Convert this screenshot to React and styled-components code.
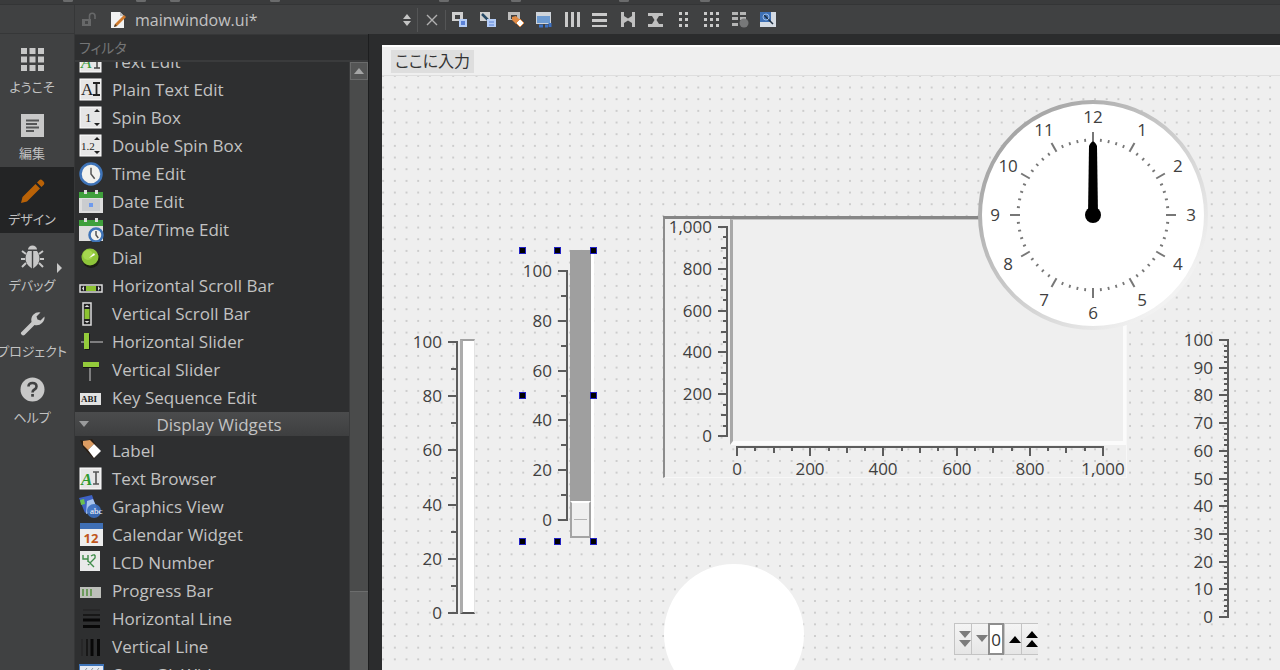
import React from 'react';
import { useState } from 'react';
import styled, { createGlobalStyle, css } from 'styled-components';

// rail on the left
const modes = [
    { id: 'welcome', label: 'ようこそ' },
    { id: 'edit', label: '編集' },
    { id: 'design', label: 'デザイン' },
    { id: 'debug', label: 'デバッグ', more: true },
    { id: 'project', label: 'プロジェクト' },
    { id: 'help', label: 'ヘルプ' },
];

const inputWidgets = [
    ['richtext', 'Text Edit'],
    ['plaintext', 'Plain Text Edit'],
    ['spin', 'Spin Box'],
    ['dspin', 'Double Spin Box'],
    ['time', 'Time Edit'],
    ['date', 'Date Edit'],
    ['datetime', 'Date/Time Edit'],
    ['dial', 'Dial'],
    ['hscroll', 'Horizontal Scroll Bar'],
    ['vscroll', 'Vertical Scroll Bar'],
    ['hslider', 'Horizontal Slider'],
    ['vslider', 'Vertical Slider'],
    ['keyseq', 'Key Sequence Edit'],
];

const displayWidgets = [
    ['label', 'Label'],
    ['browser', 'Text Browser'],
    ['graphics', 'Graphics View'],
    ['calendar', 'Calendar Widget'],
    ['lcd', 'LCD Number'],
    ['progress', 'Progress Bar'],
    ['hline', 'Horizontal Line'],
    ['vline', 'Vertical Line'],
    ['opengl', 'OpenGL Widget'],
];

const tools = [
    ['widgets', 'Edit Widgets'],
    ['signals', 'Edit Signals/Slots'],
    ['buddies', 'Edit Buddies'],
    ['tab', 'Edit Tab Order'],
    ['hlayout', 'Lay Out Horizontally'],
    ['vlayout', 'Lay Out Vertically'],
    ['hsplit', 'Lay Out Horizontally in Splitter'],
    ['vsplit', 'Lay Out Vertically in Splitter'],
    ['form', 'Lay Out in a Form Layout'],
    ['grid', 'Lay Out in a Grid'],
    ['break', 'Break Layout'],
    ['adjust', 'Adjust Size'],
];

const range = (from, to, step) => {
    const list = [];
    for (let v = from; v <= to; v += step) list.push(v);
    return list;
};

export default function App() {
    const [mode, setMode] = useState('design');
    const [filter, setFilter] = useState('');

    return (
        <>
            <GlobalStyle />
            <StyledPage>
                <StyledStrip>
                    {[63, 136, 170, 270, 439, 511, 619, 700].map(x => <i key={x} style={{ left: x }} />)}
                </StyledStrip>
                <StyledCorner />
                <StyledToolbar>
                    <StyledFileBox>
                        <LockIcon />
                        <FileIcon />
                        <StyledFileSelect aria-label="file">
                            <option>mainwindow.ui*</option>
                        </StyledFileSelect>
                        <svg width="10" height="14" viewBox="0 0 10 14" fill="#c4c4c4">
                            <path d="M5 1 9 6H1zM5 13 9 8H1z" />
                        </svg>
                    </StyledFileBox>
                    <StyledCloseButton aria-label="close">
                        <svg width="12" height="12" viewBox="0 0 12 12" stroke="#b0b0b0" strokeWidth="1.4">
                            <path d="M1 1 11 11M11 1 1 11" />
                        </svg>
                    </StyledCloseButton>
                    <StyledTools>
                        {tools.map(([id, name]) => (
                            <StyledToolButton key={id} aria-label={name}>
                                <ToolIcon id={id} />
                            </StyledToolButton>
                        ))}
                    </StyledTools>
                </StyledToolbar>

                <StyledRail>
                    {modes.map(m => (
                        <StyledMode key={m.id} $active={m.id === mode} onClick={() => setMode(m.id)}>
                            <ModeIcon id={m.id} />
                            <span>{m.label}</span>
                            {m.more && <StyledMore width="5" height="10" viewBox="0 0 5 10"><path d="M0 0 5 5 0 10z" fill="#c8c8c8" /></StyledMore>}
                        </StyledMode>
                    ))}
                </StyledRail>

                <StyledSidebar>
                    <StyledFilter
                        type="text"
                        aria-label="フィルタ"
                        placeholder="フィルタ"
                        value={filter}
                        onChange={e => setFilter(e.target.value)}
                    />
                    <StyledBoxArea>
                        <StyledLists>
                            <WidgetList items={inputWidgets} filter={filter} />
                            <StyledCategory>
                                <svg width="10" height="6" viewBox="0 0 10 6"><path d="M0 0H10L5 6z" fill="#9a9b9c" /></svg>
                                <span>Display Widgets</span>
                            </StyledCategory>
                            <WidgetList items={displayWidgets} filter={filter} />
                        </StyledLists>
                        <StyledScrollbar>
                            <StyledScrollUp aria-label="scroll up">
                                <svg width="10" height="6" viewBox="0 0 10 6"><path d="M0 6H10L5 0z" fill="#a5a6a6" /></svg>
                            </StyledScrollUp>
                            <StyledThumb />
                        </StyledScrollbar>
                    </StyledBoxArea>
                </StyledSidebar>

                <StyledWorkspace>
                    <StyledForm>
                        <StyledMenuBar>
                            <StyledMenuItem>ここに入力</StyledMenuItem>
                        </StyledMenuBar>
                        <FormCanvas />
                    </StyledForm>
                </StyledWorkspace>
            </StyledPage>
        </>
    )
}

function WidgetList({ items, filter }) {
    const shown = items.filter(([, name]) => name.toLowerCase().includes(filter.toLowerCase()));
    return (
        <StyledList>
            {shown.map(([id, name]) => (
                <StyledListItem key={id}>
                    <WidgetIcon id={id} />
                    {name}
                </StyledListItem>
            ))}
        </StyledList>
    )
}

// everything that was dropped on the form
function FormCanvas() {
    const [level, setLevel] = useState(0);
    const [count, setCount] = useState(0);

    return (
        <StyledCanvas>
            <StyledGridDots>
                <defs>
                    <pattern id="dots" x="7" y="-6" width="11.67" height="11.67" patternUnits="userSpaceOnUse">
                        <rect x="5" y="5" width="1.7" height="1.7" fill="#c2c2c2" />
                    </pattern>
                </defs>
                <rect width="100%" height="100%" fill="url(#dots)" />
            </StyledGridDots>

            <StyledPlaced $x={26} $y={254}>
                <VerticalScale length={271} max={100} major={20} medium={10} minor={10} />
                <StyledPipe />
            </StyledPlaced>

            <StyledPlaced $x={136} $y={174}>
                <StyledScaleOffset>
                    <VerticalScale length={249} max={100} major={20} medium={10} minor={10} />
                </StyledScaleOffset>
                <StyledSlider
                    type="range"
                    aria-label="slider"
                    min="0"
                    max="100"
                    value={level}
                    onChange={e => setLevel(Number(e.target.value))}
                />
                {[[2, 0], [37, 0], [73, 0], [2, 145], [73, 145], [2, 291], [37, 291], [73, 291]].map(([x, y]) => (
                    <StyledHandle key={x + '-' + y} style={{ left: x, top: y }} />
                ))}
            </StyledPlaced>

            <StyledPlot>
                <StyledPlotAxis>
                    <VerticalScale length={209} max={1000} major={200} medium={100} minor={50} />
                </StyledPlotAxis>
                <StyledPlotArea />
                <StyledPlotBottom>
                    <HorizontalScale length={366} max={1000} major={200} medium={100} minor={50} />
                </StyledPlotBottom>
            </StyledPlot>

            <StyledPlaced $x={595} $y={23}>
                <Clock />
            </StyledPlaced>

            <StyledPlaced $x={797} $y={252}>
                <VerticalScale length={277} max={100} major={10} medium={10} minor={2} />
            </StyledPlaced>

            <StyledPlaced $x={282} $y={488}>
                <StyledDisc />
            </StyledPlaced>

            <StyledCounter>
                <StyledStep aria-label="minus ten" onClick={() => setCount(count - 10)}>
                    <svg width="12" height="18" viewBox="0 0 12 18"><path d="M0 1H12L6 8zM0 10H12L6 17z" fill="#7c7c7c" /></svg>
                </StyledStep>
                <StyledStep aria-label="minus one" onClick={() => setCount(count - 1)}>
                    <svg width="12" height="8" viewBox="0 0 12 8"><path d="M0 0H12L6 7z" fill="#7c7c7c" /></svg>
                </StyledStep>
                <StyledCount aria-label="count" value={count} readOnly />
                <StyledStep aria-label="plus one" onClick={() => setCount(count + 1)}>
                    <svg width="12" height="8" viewBox="0 0 12 8"><path d="M0 8H12L6 1z" /></svg>
                </StyledStep>
                <StyledStep aria-label="plus ten" onClick={() => setCount(count + 10)}>
                    <svg width="12" height="18" viewBox="0 0 12 18"><path d="M0 8H12L6 1zM0 17H12L6 10z" /></svg>
                </StyledStep>
            </StyledCounter>
        </StyledCanvas>
    )
}

const tickLength = (v, major, medium) => (v % major === 0 ? 10 : v % medium === 0 ? 7 : 5);

function VerticalScale({ length, max, major, medium, minor }) {
    const pos = v => 12 + Math.round(length * (1 - v / max));
    return (
        <StyledScale width="50" height={length + 24}>
            {range(0, max, minor).map(v => (
                <rect key={v} x={50 - tickLength(v, major, medium)} y={pos(v) - 1} width={tickLength(v, major, medium)} height="2" />
            ))}
            <rect x="48" y="11" width="2" height={length + 2} />
            {range(0, max, major).map(v => (
                <text key={v} x="34" y={pos(v) + 6} textAnchor="end">{v.toLocaleString('en-US')}</text>
            ))}
        </StyledScale>
    )
}

function HorizontalScale({ length, max, major, medium, minor }) {
    const pos = v => 25 + Math.round(length * v / max);
    return (
        <StyledScale width={length + 50} height="34">
            {range(0, max, minor).map(v => (
                <rect key={v} x={pos(v) - 1} y="0" width="2" height={tickLength(v, major, medium)} />
            ))}
            <rect x="24" y="0" width={length + 2} height="2" />
            {range(0, max, major).map(v => (
                <text key={v} x={pos(v)} y="29" textAnchor="middle">{v.toLocaleString('en-US')}</text>
            ))}
        </StyledScale>
    )
}

function Clock() {
    const c = 116;
    const at = (deg, r) => {
        const a = (deg * Math.PI) / 180;
        return [c + r * Math.sin(a), c - r * Math.cos(a)];
    };
    return (
        <StyledScale width="232" height="232">
            <defs>
                <linearGradient id="rim" x1="0.15" y1="0.15" x2="0.85" y2="0.85">
                    <stop offset="0" stopColor="#a6a6a6" />
                    <stop offset="1" stopColor="#f2f2f2" />
                </linearGradient>
            </defs>
            <circle cx={c} cy={c} r="113" fill="#fff" stroke="url(#rim)" strokeWidth="4" />
            {range(0, 59, 1).map(i => {
                const hour = i % 5 === 0;
                const [x1, y1] = at(i * 6, hour ? 73 : 73.5);
                const [x2, y2] = at(i * 6, hour ? 83 : 76.5);
                return <line key={i} x1={x1} y1={y1} x2={x2} y2={y2} stroke="#777" strokeWidth={hour ? 2 : 1.8} />;
            })}
            {range(1, 12, 1).map(h => {
                const [x, y] = at(h * 30, 98);
                return <text key={h} x={x} y={y + 6} textAnchor="middle">{h}</text>;
            })}
            <path d={`M${c - 4} 47Q${c} 38 ${c + 4} 47L${c + 5} ${c}H${c - 5}z`} fill="#000" />
            <circle cx={c} cy={c} r="8" fill="#000" />
        </StyledScale>
    )
}

function LockIcon() {
    return (
        <svg width="16" height="18" viewBox="0 0 16 18" fill="none">
            <rect x="1" y="8" width="9" height="7" fill="#676869" />
            <path d="M8.500 8V5a2.700 2.700 0 0 1 5.500 0V8" stroke="#676869" strokeWidth="1.600" />
            <rect x="4" y="10" width="3" height="3" fill="#454647" />
        </svg>
    )
}

function FileIcon() {
    return (
        <svg width="18" height="18" viewBox="0 0 18 18">
            <path d="M2 1H11L15 5V17H2z" fill="#f2f2f2" />
            <path d="M11 1V5H15z" fill="#bdbdbd" />
            <path d="M5 16 6 13 15 4 17 6 8 15z" fill="#d07a2c" />
            <path d="M5 16 6 13 8 15z" fill="#4a3a2a" />
        </svg>
    )
}

const modeShapes = {
    welcome: <path d="M1 1h6v6H1zM9.500 1h6v6h-6zM18 1h6v6h-6zM1 9.500h6v6H1zM9.500 9.500h6v6h-6zM18 9.500h6v6h-6zM1 18h6v6H1zM9.500 18h6v6h-6zM18 18h6v6h-6z" />,
    edit: (
        <>
            <rect x="1" y="1" width="23" height="23" />
            <path d="M6 7.500h13M6 11h11M6 14.500h13M6 18h8" stroke="#555657" strokeWidth="1.800" />
        </>
    ),
    design: <path fill="#b96207" d="M1 24 2.500 18 15.500 5 20 9.500 7 22.500zM17 3.500 19.500 1Q21 0 22.500 1.500L23.500 2.500Q25 4 24 5.500L21.500 8z" />,
    debug: (
        <>
            <path d="M8 4.500a4.500 4 0 0 1 9 0z" />
            <path d="M11.800 6H8Q5.500 9 5.500 14T11.800 23.500zM13.200 6H17Q19.500 9 19.500 14T13.200 23.500z" />
            <path d="M6 9 2 6M5 14H1M6 18 2 22M19 9 23 6M20 14H24M19 18 23 22" stroke="#c8c8c8" strokeWidth="2" />
        </>
    ),
    project: <path d="M1 21.500 11.500 11Q10.500 6.500 13.500 3.500T20.500 1.500L16.500 5.500 17.500 8.500 20.500 9.500 24.500 5.500Q25 9 22 12T14.500 14L4.500 24Q3 25 1.700 23.700T1 21.500z" />,
    help: (
        <>
            <circle cx="12.500" cy="12.500" r="12" />
            <path d="M8.500 9.500Q8.500 6 12.500 6T16.500 9.500Q16.500 11.500 14.500 12.500T12.500 15.500" fill="none" stroke="#404142" strokeWidth="2.600" />
            <rect x="11.200" y="17" width="2.700" height="2.700" fill="#404142" />
        </>
    ),
};

function ModeIcon({ id }) {
    return <svg width="25" height="25" viewBox="0 0 25 25" fill="#c8c8c8">{modeShapes[id]}</svg>
}

const Paper = () => <rect x="1" y="1" width="21" height="21" fill="#e6e6e6" stroke="#fff" />;
const Clockface = ({ cx, cy, r }) => (
    <>
        <circle cx={cx} cy={cy} r={r} fill="#f2f2ee" stroke="#3f74b8" strokeWidth="2.500" />
        <path d={`M${cx} ${cy - r * 0.6}V${cy}L${cx + r * 0.35} ${cy + r * 0.45}`} fill="none" stroke="#555" strokeWidth="1.500" />
    </>
);
const CalendarPage = () => (
    <>
        <rect x="0" y="4" width="24" height="19" fill="#dedede" />
        <rect x="0" y="2" width="24" height="6" fill="#3fa03c" />
        <rect x="5" y="0" width="3" height="4" fill="#ddd" />
        <rect x="16" y="0" width="3" height="4" fill="#ddd" />
    </>
);

const widgetShapes = {
    richtext: <><Paper /><text x="2" y="18" fontSize="17" fill="#3a9a3a" fontStyle="italic">A</text><path d="M15 5h6M18 5v13M15 18h6" stroke="#444" strokeWidth="1.500" /></>,
    plaintext: <><Paper /><text x="2" y="17" fontSize="17" fill="#222">A</text><path d="M14 5h7M17.500 5v12M14 17h7" stroke="#222" strokeWidth="1.800" /></>,
    spin: <><Paper /><text x="6" y="16" fontSize="13" fill="#222">1</text><path d="M15 6 18 3 21 6zM15 17 18 20 21 17z" fill="#222" /></>,
    dspin: <><Paper /><text x="2" y="16" fontSize="11" fill="#222">1.2</text><path d="M15 6 18 3 21 6zM15 17 18 20 21 17z" fill="#222" /></>,
    time: <Clockface cx={12} cy={12} r={10.5} />,
    date: <><CalendarPage /><rect x="3" y="9" width="18" height="12" fill="#cacccf" /><rect x="10" y="13" width="4" height="4" fill="#6f9bee" /></>,
    datetime: <><CalendarPage /><Clockface cx={17} cy={17} r={6.5} /></>,
    dial: <><ellipse cx="12" cy="13" rx="9" ry="9" fill="#1d1f16" /><circle cx="11" cy="11" r="8.500" fill="#8fc63a" /><circle cx="9" cy="9" r="5" fill="#a6d84f" /><path d="M10 12 15 7 16 9z" fill="#fff" /></>,
    hscroll: <><rect x="1" y="11" width="22" height="7" fill="#222" stroke="#ddd" strokeWidth="1.500" /><rect x="7" y="12" width="10" height="5" fill="#8cc332" /><path d="M5 12V17L3 14.500zM19 12V17L21 14.500z" fill="#ddd" /></>,
    vscroll: <><rect x="4" y="1" width="8" height="22" fill="#222" stroke="#ddd" strokeWidth="1.500" /><rect x="5.500" y="7" width="5" height="10" fill="#8cc332" /><path d="M5.500 5h5L8 3zM5.500 19h5L8 21z" fill="#ddd" /></>,
    hslider: <><path d="M2 12H24" stroke="#9a9a9a" strokeWidth="1.500" /><rect x="5" y="3" width="5" height="16" fill="#94cb3b" /><path d="M10.500 4V19.500H6" fill="none" stroke="#151515" /></>,
    vslider: <><path d="M11 7V23" stroke="#9a9a9a" strokeWidth="1.500" /><rect x="4" y="4" width="16" height="5" fill="#94cb3b" /><path d="M4 9.500H20" stroke="#151515" /></>,
    keyseq: <><rect x="1" y="7" width="21" height="12" fill="#e2e2e2" /><text x="2" y="16" fontSize="9" fontWeight="bold" fill="#222">ABI</text></>,
    label: <><path d="M1 1 5 2 13 0 21 12 15 20 4 8z" fill="#2a1d12" /><path d="M4 2 11 1 15 5 9 11 4 6z" fill="#dc9c62" /><path d="M9 11 15 5 22 12 15 19z" fill="#fff" /></>,
    browser: <><Paper /><text x="2" y="18" fontSize="17" fill="#2f9a2f" fontStyle="italic" fontWeight="bold">A</text><path d="M14 5h6M17 5v12M14 17h6" stroke="#555" strokeWidth="1.600" /></>,
    graphics: <><path d="M0 3 13 0 17 12 6 18z" fill="#3e62c4" /><path d="M1 5 5 4 6 9 2 10z" fill="#6bbf4f" /><path d="M8 6 14 4 19 15 7 19z" fill="#a9c4ec" /><circle cx="15" cy="16" r="7" fill="#3b6fc0" fillOpacity=".9" /><text x="11" y="19" fontSize="9" fill="#fff">abc</text></>,
    calendar: <><rect x="1" y="1" width="23" height="22" fill="#ededed" /><rect x="1" y="0" width="23" height="6" fill="#3f6fb5" /><text x="12" y="20" fontSize="13" fontFamily="Open Sans, sans-serif" fontWeight="bold" fill="#c0561c" textAnchor="middle">12</text></>,
    lcd: <><rect x="1" y="0" width="20" height="20" fill="#e9e9e9" /><path d="M4 4V8H9M9 4V11M12 5Q17 2 16 7L9 14M9 10 15 16" fill="none" stroke="#3f8c4a" strokeWidth="1.400" /></>,
    progress: <><rect x="1" y="8" width="21" height="11" fill="#bdbfba" /><path d="M4 10V17M8 10V17M12 10V17" stroke="#6c9a5c" strokeWidth="2" /></>,
    hline: <><path d="M4 3H21" stroke="#202020" /><path d="M4 8H21" stroke="#181818" strokeWidth="2" /><path d="M4 13H21M4 19.500H21" stroke="#080808" strokeWidth="3" /></>,
    vline: <><path d="M3 4V21" stroke="#202020" /><path d="M8 4V21" stroke="#181818" strokeWidth="2" /><path d="M13 4V21M19.500 4V21" stroke="#080808" strokeWidth="3" /></>,
    opengl: <><rect x="0" y="2" width="25" height="20" fill="#e4e9f2" stroke="#3f74b8" strokeWidth="2" /><path d="M4 10 8 5M10 10 14 5M16 10 20 5" stroke="#8d949c" /></>,
};

function WidgetIcon({ id }) {
    return <svg width="25" height="24" viewBox="0 0 25 24" fontFamily='"Liberation Serif", serif'>{widgetShapes[id]}</svg>
}

const toolShapes = {
    widgets: <><path d="M1 1H12V10H1z" fill="#d0d0d0" /><path d="M4 4H9V8H4z" fill="#404142" /><path d="M8 8H16V16H8z" fill="#b5cdf7" /><path d="M10 10h4v4h-4z" fill="#5b82d8" /></>,
    signals: <><path d="M1 1H11V10H1z" fill="#d0d0d0" /><path d="M3 3 10 10" stroke="#274a66" strokeWidth="2.500" /><path d="M8 8H17V16H8z" fill="#b5cdf7" /><path d="M10 11h5M10 14h5" stroke="#5b82d8" /></>,
    buddies: <><path d="M1 1H13V9H1z" fill="#bdbdbd" /><path d="M4 4h6v4H4z" fill="#404142" /><path d="M5 6 9 5 13 9 9 13 5 9z" fill="#e08a45" /><path d="M9 12 13 8 17 12 13 16z" fill="#fff" stroke="#e08a45" /></>,
    tab: <><path d="M1 1H16V13H1z" fill="#cfd4da" /><path d="M2 5H15V12H2z" fill="#6d9bd2" /><path d="M4 15H8M10 15h3M15 12v4" stroke="#3d72c4" strokeWidth="3" /></>,
    hlayout: <path d="M2 1h3v15H2zM8 1h3v15H8zM14 1h3v15h-3z" fill="#cacaca" />,
    vlayout: <path d="M1 2h15v3H1zM1 8h15v3H1zM1 14h15v2H1z" fill="#cacaca" />,
    hsplit: <path d="M2 1h3v15H2zM13 1h3v15h-3zM5 5l4 2.500L13 5v7L9 9.500 5 12z" fill="#c0c0c0" />,
    vsplit: <path d="M1 2h15v3H1zM1 13h15v3H1zM5 5h7L9.500 9 12 13H5L7.500 9z" fill="#c0c0c0" />,
    form: <path d="M4 1h3v3H4zM10 1h3v3h-3zM4 7h3v3H4zM10 7h3v3h-3zM4 13h3v3H4zM10 13h3v3h-3z" fill="#cacaca" />,
    grid: <path d="M1 1h3v3H1zM7 1h3v3H7zM13 1h3v3h-3zM1 7h3v3H1zM7 7h3v3H7zM13 7h3v3h-3zM1 13h3v3H1zM7 13h3v3H7zM13 13h3v3h-3z" fill="#cacaca" />,
    break: <><path d="M1 1h6v3H1zM9 1h6v3H9zM1 6h6v3H1zM9 6h6v3H9zM1 12h6v3H1z" fill="#b5b5b5" /><circle cx="13" cy="12" r="4.500" fill="#777879" /></>,
    adjust: <><path d="M1 1H17V16H1z" fill="#d5dbe3" /><path d="M1 1H12V11H1z" fill="#3e70b4" /><path d="M5 4 14 13" stroke="#1f2f40" strokeWidth="1.500" /><circle cx="7" cy="6" r="3" fill="none" stroke="#9bbbe4" /></>,
};

function ToolIcon({ id }) {
    return <svg width="18" height="18" viewBox="0 0 18 18">{toolShapes[id]}</svg>
}

const GlobalStyle = createGlobalStyle`
* { box-sizing: border-box; }
body {
    margin: 0;
    overflow: hidden;
    background: #2e2f30;
    font-family: "Open Sans", "Noto Sans CJK JP", sans-serif;
    font-feature-settings: "palt";
}
button, input, select {
    font: inherit;
    font-feature-settings: inherit;
    color: inherit;
    border: 0;
    border-radius: 0;
    padding: 0;
    background: none;
}
`;

const StyledPage = styled.div`
display: grid;
grid-template-columns: 75px 294px 1fr;
grid-template-rows: 5px 29px 1fr;
height: 100vh;
color: #c2c2c2;
font-size: 17px;
`;

const StyledStrip = styled.div`
grid-column: 1 / -1;
position: relative;
overflow: hidden;
background: #3a3b3c;
border-bottom: 1px solid #343536;

i {
    position: absolute;
    top: -1px;
    width: 10px;
    height: 3px;
    border-radius: 2px;
    background: #6a6b6c;
}
`;

const StyledCorner = styled.div`
background: #404142;
border-right: 1px solid #363738;
border-bottom: 1px solid #363738;
`;

const StyledToolbar = styled.header`
grid-column: 2 / -1;
display: flex;
align-items: center;
background: #404142;
`;

const StyledFileBox = styled.div`
display: flex;
align-items: center;
gap: 8px;
width: 343px;
padding: 0 5px 0 6px;
border-right: 1px solid #545556;

svg:first-child {
    margin-right: 4px;
}
`;

const StyledFileSelect = styled.select`
flex: 1;
appearance: none;
outline: none;
font-size: 16px;
line-height: 24px;
`;

const StyledCloseButton = styled.button`
display: flex;
align-items: center;
justify-content: center;
width: 28px;
height: 20px;
border-right: 1px solid #545556;
`;

const StyledTools = styled.div`
display: flex;
`;

const StyledToolButton = styled.button`
display: flex;
align-items: center;
justify-content: center;
width: 28px;
height: 24px;
`;

const StyledRail = styled.nav`
display: flex;
flex-direction: column;
padding-top: 1px;
background: #404142;
border-right: 1px solid #363738;
`;

const StyledMode = styled.button`
position: relative;
display: flex;
flex-direction: column;
align-items: center;
justify-content: flex-end;
gap: 5px;
height: 66px;
padding-bottom: 4px;
padding-right: 10px;
font-size: 13px;
line-height: 20px;
white-space: nowrap;
cursor: pointer;
background: ${props => props.$active ? '#232425' : 'none'};
`;

const StyledMore = styled.svg`
position: absolute;
right: 12px;
top: 30px;
`;

const StyledSidebar = styled.aside`
display: flex;
flex-direction: column;
min-height: 0;
background: #2e2f30;
border-right: 1px solid #1d1e1f;
`;

const StyledFilter = styled.input`
height: 28px;
padding: 0 4px;
font-size: 14px;
outline: none;
border-top: 1px solid #363738;
border-bottom: 2px solid #3a3b3c;

&::placeholder {
    color: #747576;
    opacity: 1;
}
`;

const StyledBoxArea = styled.div`
flex: 1;
display: flex;
min-height: 0;
overflow: hidden;
`;

// the list is already scrolled down by half a row
const StyledLists = styled.div`
flex: 1;
margin-top: -14px;
`;

const StyledList = styled.ul`
list-style: none;
margin: 0;
padding: 0;
`;

const StyledListItem = styled.li`
display: flex;
align-items: center;
gap: 8px;
height: 28px;
padding-left: 4px;
line-height: 28px;
white-space: nowrap;
`;

const StyledCategory = styled.div`
display: flex;
align-items: center;
height: 24px;
margin-bottom: 1px;
padding: 0 0 0 4px;
background: linear-gradient(#4b4c4d, #3e3f40);

span {
    flex: 1;
    text-align: center;
}
`;

const StyledScrollbar = styled.div`
display: flex;
flex-direction: column;
justify-content: space-between;
width: 19px;
background: #4a4b4b;
border-left: 1px solid #3a3b3c;
`;

const StyledScrollUp = styled.button`
display: flex;
align-items: center;
justify-content: center;
height: 18px;
background: #545555;
border: 1px solid #6a6b6b;
`;

const StyledThumb = styled.div`
height: 13%;
background: #5a5b5b;
border-top: 1px solid #6c6d6d;
`;

const StyledWorkspace = styled.main`
display: flex;
min-width: 0;
min-height: 0;
padding: 11px 0 0 13px;
background: #2b2c2d;
`;

const StyledForm = styled.section`
flex: 1;
display: flex;
flex-direction: column;
min-width: 0;
overflow: hidden;
color: #333;
background: #efefef;
border-top: 2px solid #fff;
`;

const StyledMenuBar = styled.div`
display: flex;
align-items: center;
height: 29px;
padding: 0 9px;
border-bottom: 1px solid #dedede;
`;

const StyledMenuItem = styled.button`
height: 23px;
padding: 0 4px;
font-size: 16px;
line-height: 22px;
background: #dedede;
`;

const StyledCanvas = styled.div`
flex: 1;
position: relative;
overflow: hidden;
`;

const StyledGridDots = styled.svg`
position: absolute;
width: 100%;
height: 100%;
`;

const placed = css`
position: absolute;
left: ${props => props.$x}px;
top: ${props => props.$y}px;
`;

const StyledPlaced = styled.div`
${placed}
display: flex;
align-items: flex-start;
`;

const StyledScale = styled.svg`
display: block;
overflow: visible;
fill: #404040;
font-size: 17px;

rect {
    fill: #5c5c5c;
}
`;

const StyledPipe = styled.div`
width: 15px;
height: 275px;
margin: 9px 0 0 2px;
background: #fff;
border: 1px solid #e4e4e4;
border-left: 3px solid #acacac;
border-top: 2px solid #a0a0a0;
border-bottom: 2px solid #555;
`;

const StyledScaleOffset = styled.div`
margin-top: 9px;
`;

const StyledSlider = styled.input`
appearance: none;
writing-mode: vertical-lr;
direction: rtl;
width: 24px;
height: 288px;
margin: 0 0 0 2px;
background: #9f9f9f;
border-right: 3px solid #fff;

&::-webkit-slider-thumb {
    appearance: none;
    width: 21px;
    height: 37px;
    background: linear-gradient(#b4b4b4, #b4b4b4) center / 13px 1px no-repeat #efefef;
    border: 2px solid #a4a4a4;
    border-top-color: #fff;
}
`;

const StyledHandle = styled.i`
position: absolute;
width: 7px;
height: 7px;
margin: -3px 0 0 -1px;
background: #000;
border: 1px solid #2020c4;
`;

const StyledPlot = styled.div`
position: absolute;
left: 281px;
top: 140px;
display: grid;
grid-template-columns: 65px 396px;
grid-template-rows: 226px auto;
border: 1px solid #f7f7f7;
border-left: 2px solid #8c8c8c;
border-top: 3px solid #868686;
`;

const StyledPlotAxis = styled.div`
display: flex;
justify-content: flex-end;
margin: -4px 2px 0 0;
`;

const StyledPlotArea = styled.div`
background: #efefef;
border-left: 3px solid #a8a8a8;
border-top: 1px solid #c4c4c4;
border-right: 3px solid #fbfbfb;
border-bottom: 4px solid #fbfbfb;
`;

const StyledPlotBottom = styled.div`
grid-column: 2;
margin: 1px 0 0 -18px;
height: 31px;
`;

const StyledDisc = styled.div`
width: 140px;
height: 140px;
border-radius: 50%;
background: #fff;
`;

const StyledCounter = styled.div`
position: absolute;
left: 572px;
top: 547px;
display: flex;
height: 32px;
`;

const StyledStep = styled.button`
display: flex;
align-items: center;
justify-content: flex-end;
width: 17px;
background: linear-gradient(#f4f4f4, #e6e6e6);
border: solid #c4c4c4;
border-width: 1px 0 1px 1px;
`;

const StyledCount = styled.input`
width: 16px;
text-align: center;
background: #fff;
border: 2px solid #8e8e8e;
outline: none;
`;
